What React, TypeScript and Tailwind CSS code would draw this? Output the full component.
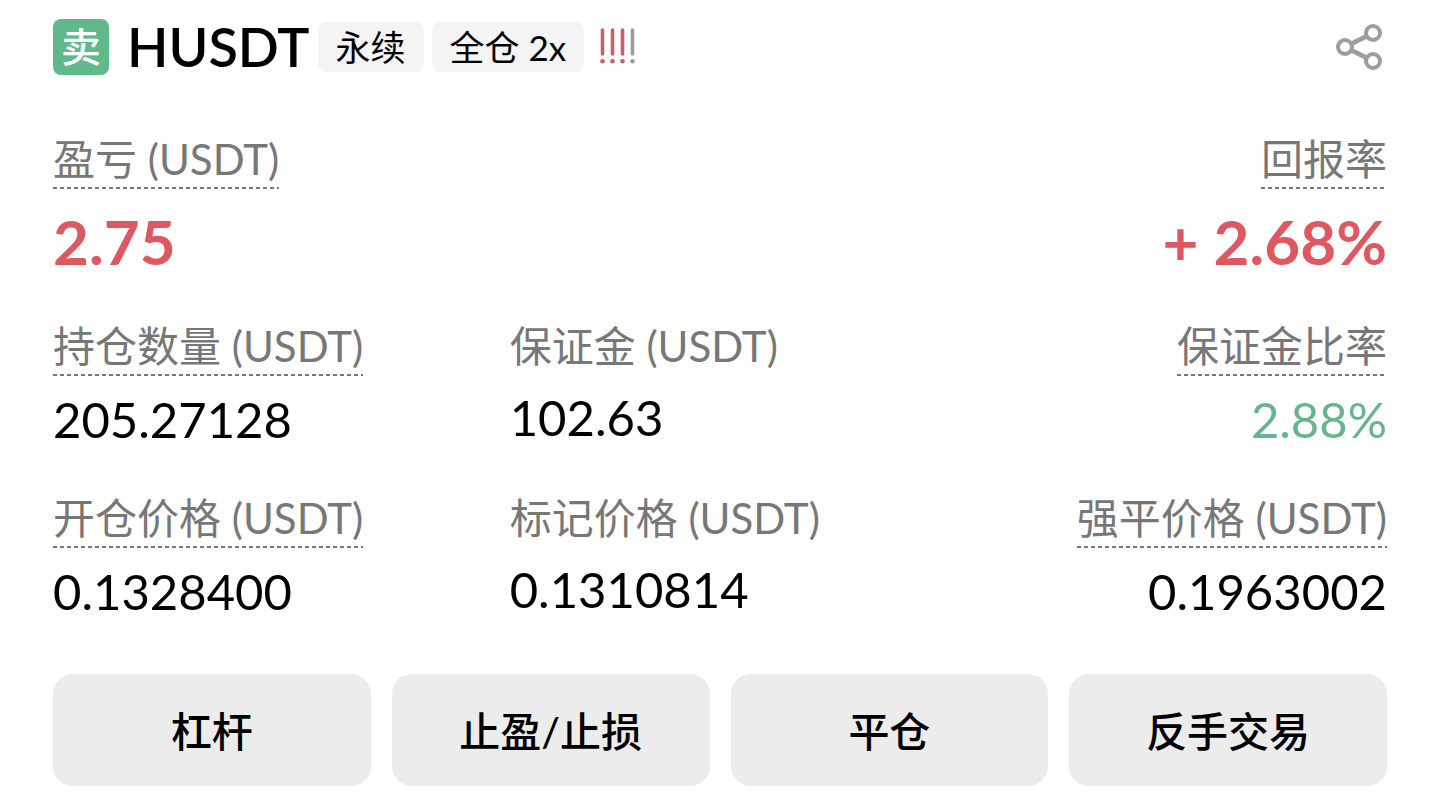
interface Field {
  label: string;
  value: string;
  underline?: boolean;
  align?: 'left' | 'right';
  large?: boolean;
  tone?: 'black' | 'red' | 'green';
}

const summary: Field[] = [
  { label: '盈亏 (USDT)', value: '2.75', underline: true, large: true, tone: 'red' },
  { label: '回报率', value: '+ 2.68%', underline: true, large: true, tone: 'red', align: 'right' },
];

const details: Field[] = [
  { label: '持仓数量 (USDT)', value: '205.27128', underline: true },
  { label: '保证金 (USDT)', value: '102.63' },
  { label: '保证金比率', value: '2.88%', underline: true, align: 'right', tone: 'green' },
  { label: '开仓价格 (USDT)', value: '0.1328400', underline: true },
  { label: '标记价格 (USDT)', value: '0.1310814' },
  { label: '强平价格 (USDT)', value: '0.1963002', underline: true, align: 'right' },
];

const actions = ['杠杆', '止盈/止损', '平仓', '反手交易'];

const tones = {
  black: 'text-black',
  red: 'text-[#de5862]',
  green: 'text-[#66b58d]',
};

const ShareIcon = ({ className = '' }: { className?: string }) => (
  <svg viewBox="0 0 46 46" fill="none" stroke="currentColor" strokeWidth="4" className={className}>
    <circle cx="9" cy="23" r="7" />
    <circle cx="37" cy="9" r="7" />
    <circle cx="37" cy="37" r="7" />
    <path d="M15.2 19.9 30.8 12.1M15.2 26.1 30.8 33.9" strokeWidth="4.6" />
  </svg>
);

const RiskIcon = ({ className = '' }: { className?: string }) => (
  <svg viewBox="0 0 36 38" strokeWidth="3.6" strokeLinecap="round" className={className}>
    {[2.5, 12.5, 22.5, 32.5].map((x, i) => (
      <g key={x} stroke={i < 3 ? '#c4626a' : '#9d9d9d'} fill={i < 3 ? '#c4626a' : '#9d9d9d'}>
        <path d={`M${x} 2V26`} />
        <circle cx={x} cy="33.2" r="2.3" stroke="none" />
      </g>
    ))}
  </svg>
);

const FieldItem = ({ label, value, underline, align = 'left', large, tone = 'black' }: Field) => (
  <div className={`flex flex-col ${align === 'right' ? 'items-end' : 'items-start'}`}>
    <dt
      className={`text-[42px] leading-[56px] whitespace-nowrap text-[#777777] ${
        underline
          ? 'pb-[2px] bg-[repeating-linear-gradient(90deg,#777777_0_4px,transparent_4px_7px)] bg-[length:100%_2px] bg-bottom bg-no-repeat'
          : ''
      }`}
    >
      {label}
    </dt>
    <dd
      className={`whitespace-nowrap ${tones[tone]} ${
        large ? 'mt-[15px] text-[62px] leading-[74px] font-bold' : 'mt-[15px] text-[49px] leading-[56px]'
      }`}
    >
      {value}
    </dd>
  </div>
);

export default function App() {
  return (
    <main className="bg-white px-[53px] pt-[19px] pb-[23px] text-black font-[Lato,'Noto_Sans_CJK_SC',sans-serif]">
      <header className="flex items-center justify-between">
        <div className="flex items-center">
          <span className="flex size-14 items-center justify-center rounded-lg bg-[#60b98a] text-[40px] leading-none font-medium text-white">
            卖
          </span>
          <h1 className="ml-[18px] text-[54px] leading-[56px] font-semibold">HUSDT</h1>
          <span className="ml-2 rounded-lg bg-[#f4f4f4] px-[18px] text-[35px] leading-[50px]">永续</span>
          <span className="ml-2 rounded-lg bg-[#f4f4f4] px-[18px] text-[35px] leading-[50px]">全仓 2x</span>
          <RiskIcon className="ml-4 h-[38px] w-9" />
        </div>
        <button type="button" aria-label="分享" className="mr-[5px] text-[#9d9d9d]">
          <ShareIcon className="size-[46px]" />
        </button>
      </header>

      <dl className="mt-14 flex justify-between">
        {summary.map((field) => (
          <FieldItem key={field.label} {...field} />
        ))}
      </dl>

      <dl className="mt-10 grid grid-cols-3 gap-x-9 gap-y-[43px]">
        {details.map((field) => (
          <FieldItem key={field.label} {...field} />
        ))}
      </dl>

      <div className="mt-[55px] grid grid-cols-4 gap-[21px]">
        {actions.map((action) => (
          <button
            key={action}
            type="button"
            className="h-28 rounded-[20px] bg-[#ececec] pt-[3px] text-[41px] leading-[56px] font-medium"
          >
            {action}
          </button>
        ))}
      </div>
    </main>
  );
}
